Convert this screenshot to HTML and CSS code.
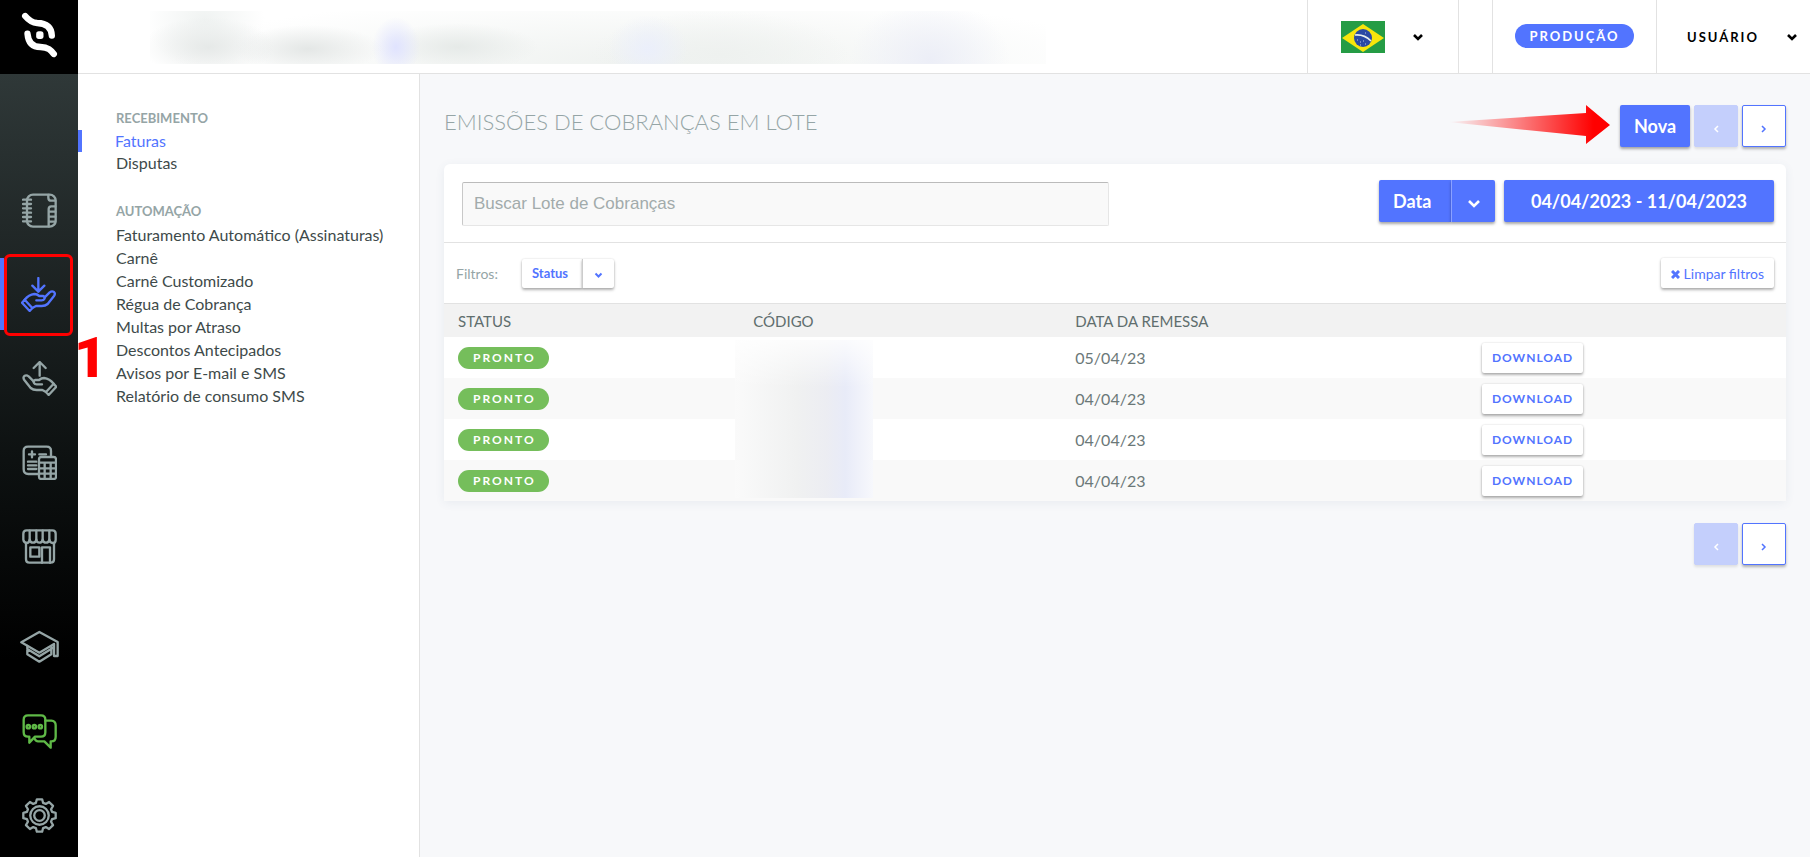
FILE: index.html
```html
<!DOCTYPE html>
<html lang="pt-BR">
<head>
    <meta charset="UTF-8">
    <meta name="viewport" content="width=device-width, initial-scale=1.0">
    <title>Emissões de Cobranças em Lote</title>
    <link rel="stylesheet" href="styles.css">
</head>
<body>

<!-- Main icon bar -->
<nav class="sidebar" aria-label="Principal">
    <a class="logo" href="#" aria-label="Início">
        <svg viewBox="60 36 110 138" width="37" height="46" fill="none" stroke="#fff" stroke-width="19" stroke-linecap="round">
            <path d="M72 48C82 60 92 68 108 69C138 70 151 84 152 107"/>
            <path d="M79 101C81 126 92 141 118 141C142 141 150 152 158 162"/>
            <rect x="105" y="94" width="22" height="23" rx="8" fill="#fff" stroke="none"/>
        </svg>
    </a>

    <div class="nav-group">
        <a class="nav-item" href="#" aria-label="Cadastros">
            <svg class="icon" viewBox="0 0 105 105">
                <rect x="15" y="5" width="86" height="96" rx="18"/>
                <path d="M3 20H27M3 33H27M3 46H27M3 59H27M3 72H27M3 85H27"/>
                <path d="M79 6V14Q79 23 88 23H100M80 100V48Q80 40 88 40H100M80 56H100M80 71H100M80 86H100"/>
            </svg>
        </a>
        <a class="nav-item active" href="#" aria-label="Receber">
            <svg class="icon" viewBox="0 0 105 105">
                <path d="M52 3V44M34 26L52 44L70 26"/>
                <path d="M3 77L11 68L34 93L26 102Z"/>
                <path d="M11 68Q23 53 40 51Q48 51 55 57H66Q74 59 70 66Q68 70 62 70H46"/>
                <path d="M71 61L86 46Q93 41 99 45Q104 50 99 57L80 81Q73 87 62 87H45L34 93"/>
            </svg>
            <span class="highlight"></span>
            <span class="step">1</span>
        </a>
        <a class="nav-item" href="#" aria-label="Pagar">
            <svg class="icon" viewBox="0 0 105 105">
                <path d="M53 44V3M35 21L53 3L71 21"/>
                <g transform="translate(106 0) scale(-1 1)">
                    <path d="M3 77L11 68L34 93L26 102Z"/>
                    <path d="M11 68Q23 53 40 51Q48 51 55 57H66Q74 59 70 66Q68 70 62 70H46"/>
                    <path d="M71 61L86 46Q93 41 99 45Q104 50 99 57L80 81Q73 87 62 87H45L34 93"/>
                </g>
            </svg>
        </a>
        <a class="nav-item" href="#" aria-label="Contabilidade">
            <svg class="icon" viewBox="0 0 105 105">
                <path d="M47 87H19Q5 87 5 73V18Q5 5 18 5H74Q87 5 87 18V34"/>
                <path d="M21 28H39M30 19V37M52 28H72M18 50H43M18 61H43M18 72H43"/>
                <rect x="51" y="36" width="51" height="66" rx="7"/>
                <path d="M51 53H102M51 70H102M51 86H102M68 53V102M86 53V102"/>
            </svg>
        </a>
        <a class="nav-item" href="#" aria-label="Loja">
            <svg class="icon" viewBox="0 0 105 105">
                <path d="M4 32V14Q4 4 14 4H91Q101 4 101 14V32Q101 42 92 42Q84 41 82 32Q80 41 72 41Q64 41 62 32Q60 41 52 41Q44 41 43 32Q41 41 33 41Q25 41 23 32Q21 42 14 42Q5 41 4 32Z"/>
                <path d="M23 5V32M43 5V32M62 5V32M82 5V32M12 42V91Q12 101 22 101H86Q96 101 96 91V42"/>
                <path d="M25 55H52V83H25ZM60 101V55H84V101"/>
            </svg>
        </a>
    </div>

    <div class="nav-group bottom">
        <a class="nav-item" href="#" aria-label="Academia">
            <svg class="icon" viewBox="0 0 117 105">
                <path d="M4 37L58 6L113 36V78H102V42L58 68Z"/>
                <path d="M22 48V73L58 95L94 73V50M22 57L58 79L98 54"/>
            </svg>
        </a>
        <a class="nav-item chat" href="#" aria-label="Chat">
            <svg class="icon" viewBox="0 0 105 105">
                <path d="M18 4H57Q70 4 70 17V55Q70 68 57 68H39L22 86V68H18Q5 68 5 55V17Q5 4 18 4Z"/>
                <circle cx="19" cy="38" r="5"/>
                <circle cx="37" cy="38" r="5"/>
                <circle cx="55" cy="38" r="5"/>
                <path d="M70 20H88Q101 21 101 34V68Q101 82 88 82H86V101L67 82H48Q42 82 38 74"/>
            </svg>
        </a>
        <a class="nav-item" href="#" aria-label="Configurações">
            <svg class="icon" viewBox="-53 -53 106 106">
                <path d="M-11-38L-8-49H8L11-38L19-35L29-41L41-29L35-19L38-11L49-8V8L38 11L35 19L41 29L29 41L19 35L11 38L8 49H-8L-11 38L-19 35L-29 41L-41 29L-35 19L-38 11L-49 8V-8L-38-11L-35-19L-41-29L-29-41L-19-35Z"/>
                <circle r="28"/>
                <circle r="16"/>
            </svg>
        </a>
    </div>
</nav>

<!-- Top bar -->
<header class="topbar">
    <div class="account">
        <div class="account-blur"></div>
    </div>
    <button class="top-cell language" aria-label="Idioma">
        <svg class="flag" viewBox="0 0 44 32" width="44" height="32">
            <rect width="44" height="32" fill="#259c45"/>
            <path d="M1 17L22 3L43 17L22 31Z" fill="#f8e50c"/>
            <circle cx="22" cy="17" r="9" fill="#2a49a3"/>
            <path d="M14 14Q23 13 30 20" fill="none" stroke="#e8f0ec" stroke-width="1.6"/>
            <path d="M16 19h1M19 21h1M22 20h1M24 23h1M19 24h1M24 12h1" stroke="#b8c6ea" stroke-width="1"/>
        </svg>
        <svg class="caret" viewBox="0 0 12 8"><path d="M2 2L6 6L10 2"/></svg>
    </button>
    <div class="top-cell blank"></div>
    <div class="top-cell env"><span class="badge">PRODUÇÃO</span></div>
    <button class="top-cell user">USUÁRIO
        <svg class="caret" viewBox="0 0 12 8"><path d="M2 2L6 6L10 2"/></svg>
    </button>
</header>

<!-- Section menu -->
<aside class="submenu">
    <h2>RECEBIMENTO</h2>
    <ul>
        <li class="current"><a href="#">Faturas</a></li>
        <li><a href="#">Disputas</a></li>
    </ul>
    <h2>AUTOMAÇÃO</h2>
    <ul>
        <li><a href="#">Faturamento Automático (Assinaturas)</a></li>
        <li><a href="#">Carnê</a></li>
        <li><a href="#">Carnê Customizado</a></li>
        <li><a href="#">Régua de Cobrança</a></li>
        <li><a href="#">Multas por Atraso</a></li>
        <li><a href="#">Descontos Antecipados</a></li>
        <li><a href="#">Avisos por E-mail e SMS</a></li>
        <li><a href="#">Relatório de consumo SMS</a></li>
    </ul>
</aside>

<main class="content">
    <div class="title-row">
        <h1>EMISSÕES DE COBRANÇAS EM LOTE</h1>
        <svg class="pointer" viewBox="0 0 162 39" width="162" height="39">
            <defs>
                <linearGradient id="fade">
                    <stop offset="0" stop-color="#f00" stop-opacity="0"/>
                    <stop offset="0.9" stop-color="#f00"/>
                </linearGradient>
            </defs>
            <path d="M0 17L138 8V0L162 20L138 39V31Z" fill="url(#fade)"/>
        </svg>
        <div class="pager">
            <button class="btn primary">Nova</button>
            <button class="page-btn" aria-label="Anterior" disabled><svg viewBox="0 0 6 8"><path d="M5 1L2 4L5 7"/></svg></button>
            <button class="page-btn" aria-label="Próxima"><svg viewBox="0 0 6 8"><path d="M1 1L4 4L1 7"/></svg></button>
        </div>
    </div>

    <section class="card">
        <div class="search-row">
            <input class="search" type="text" aria-label="Buscar Lote de Cobranças" placeholder="Buscar Lote de Cobranças">
            <div class="date-filter">
                <div class="split">
                    <button class="btn primary">Data</button>
                    <button class="btn primary toggle" aria-label="Escolher data"><svg class="caret" viewBox="0 0 12 8"><path d="M1 1L6 6L11 1"/></svg></button>
                </div>
                <button class="btn primary range">04/04/2023 - 11/04/2023</button>
            </div>
        </div>

        <div class="filter-row">
            <span class="filter-label">Filtros:</span>
            <div class="split small">
                <button class="btn light">Status</button>
                <button class="btn light toggle" aria-label="Escolher status"><svg class="caret" viewBox="0 0 12 8"><path d="M2 2L6 6L10 2"/></svg></button>
            </div>
            <button class="btn light clear">
                <svg viewBox="0 0 9 9" width="9" height="9"><path d="M1 1L8 8M8 1L1 8"/></svg>
                Limpar filtros
            </button>
        </div>

        <div class="table-wrap">
            <table>
                <thead>
                    <tr>
                        <th class="col-status">STATUS</th>
                        <th class="col-code">CÓDIGO</th>
                        <th class="col-date">DATA DA REMESSA</th>
                        <th></th>
                    </tr>
                </thead>
                <tbody>
                    <tr>
                        <td><span class="status">PRONTO</span></td>
                        <td></td>
                        <td>05/04/23</td>
                        <td><button class="btn light download">DOWNLOAD</button></td>
                    </tr>
                    <tr>
                        <td><span class="status">PRONTO</span></td>
                        <td></td>
                        <td>04/04/23</td>
                        <td><button class="btn light download">DOWNLOAD</button></td>
                    </tr>
                    <tr>
                        <td><span class="status">PRONTO</span></td>
                        <td></td>
                        <td>04/04/23</td>
                        <td><button class="btn light download">DOWNLOAD</button></td>
                    </tr>
                    <tr>
                        <td><span class="status">PRONTO</span></td>
                        <td></td>
                        <td>04/04/23</td>
                        <td><button class="btn light download">DOWNLOAD</button></td>
                    </tr>
                </tbody>
            </table>
            <div class="code-blur"></div>
        </div>
    </section>

    <div class="pager footer">
        <button class="page-btn" aria-label="Anterior" disabled><svg viewBox="0 0 6 8"><path d="M5 1L2 4L5 7"/></svg></button>
        <button class="page-btn" aria-label="Próxima"><svg viewBox="0 0 6 8"><path d="M1 1L4 4L1 7"/></svg></button>
    </div>
</main>

</body>
</html>
```
FILE: styles.css
```css
/* Global Styles */
* {
    box-sizing: border-box;
}

body {
    margin: 0;
    min-height: 100vh;
    display: grid;
    grid-template-columns: 78px 342px 1fr;
    grid-template-rows: 74px 1fr;
    font-family: Lato, "Open Sans", sans-serif;
    font-size: 16px;
    color: #3e4a4a;
    background-color: #f7f8fa;
}

a {
    color: inherit;
    text-decoration: none;
}

button {
    font-family: inherit;
    cursor: pointer;
}

/* Icon bar */
.sidebar {
    grid-row: 1 / 3;
    display: flex;
    flex-direction: column;
    background: linear-gradient(#2f3838 74px, #0d1111 460px, #000 660px);
}

.logo {
    height: 74px;
    padding-top: 12px;
    text-align: center;
    background-color: #000;
}

.nav-group {
    padding-top: 100px;
}

.nav-group.bottom {
    margin-top: auto;
    padding: 0 0 6px;
}

.nav-item {
    position: relative;
    display: flex;
    align-items: center;
    justify-content: center;
    height: 72px;
    margin-bottom: 12px;
    color: #95a5a6;
}

.bottom .nav-item:last-child {
    margin-bottom: 0;
}

.nav-item.active {
    color: #5274ff;
    border-left: 4px solid #5274ff;
    padding-right: 6px;
}

.nav-item.chat {
    color: #5fb947;
}

.icon {
    height: 35px;
    fill: none;
    stroke: currentColor;
    stroke-width: 7;
    stroke-linejoin: round;
    stroke-linecap: round;
}

/* Tutorial marks over the active item */
.highlight {
    position: absolute;
    top: -4px;
    right: 5px;
    bottom: -6px;
    left: 0;
    border: 3px solid #f00;
    border-radius: 6px;
}

.step {
    position: absolute;
    top: 80px;
    left: 70px;
    font: 900 56px/40px Roboto, sans-serif;
    color: #f00;
}

/* Top bar */
.topbar {
    grid-column: 2 / 4;
    display: flex;
    background-color: #fff;
    border-bottom: 1px solid #e2e2e2;
}

.account {
    flex: 1;
    padding: 11px 261px 9px 72px;
}

.account-blur {
    height: 100%;
    background:
        radial-gradient(ellipse 66px 30px at 58px 36px, #e6e9e8, transparent),
        radial-gradient(ellipse 60px 50px at 55px 8px, #f0f3f2, transparent),
        radial-gradient(ellipse 74px 24px at 158px 38px, #e4e7e6, transparent),
        radial-gradient(ellipse 24px 30px at 246px 36px, #e0e3ff, transparent),
        radial-gradient(ellipse 80px 24px at 308px 36px, #e6eae8, transparent),
        radial-gradient(ellipse 40px 34px at 498px 38px, #ebeffb, transparent),
        radial-gradient(ellipse 80px 60px at 780px 48px, #eceef7, transparent),
        radial-gradient(ellipse 130px 44px at 570px 44px, #eef1ef, transparent),
        radial-gradient(ellipse 480px 70px at 500px 52px, #eff2f0, transparent);
}

.top-cell {
    display: flex;
    align-items: center;
    padding: 0;
    background: none;
    border: 0;
    border-left: 1px solid #e2e2e2;
}

.language {
    width: 151px;
    gap: 27px;
    padding-left: 33px;
}

.blank {
    width: 34px;
}

.env {
    width: 164px;
    padding: 0 22px 10px;
}

.user {
    width: 154px;
    justify-content: space-between;
    padding: 0 12px 0 30px;
    font-size: 13px;
    font-weight: 700;
    letter-spacing: 2px;
    color: #000;
}

.badge {
    width: 120px;
    margin-top: 8px;
    border-radius: 12px;
    background-color: #5274ff;
    color: #fff;
    font-size: 13px;
    font-weight: 700;
    line-height: 24px;
    letter-spacing: 2px;
    text-align: center;
}

.caret {
    width: 12px;
    height: 8px;
    fill: none;
    stroke: currentColor;
    stroke-width: 2.6;
}

.language .caret {
    color: #000;
}

/* Section menu */
.submenu {
    padding: 34px 0 0;
    background-color: #fff;
    border-right: 1px solid #e2e2e2;
}

.submenu h2 {
    margin: 0;
    padding-left: 38px;
    color: #95a5a6;
    font-size: 13px;
    line-height: 20px;
}

.submenu ul {
    list-style: none;
    margin: 2px 0 27px;
    padding: 0;
}

.submenu li {
    padding-left: 38px;
    line-height: 22px;
}

/* The long list is set a little looser than the first one */
.submenu ul:last-child li {
    line-height: 23px;
}

.submenu .current {
    padding-left: 33px;
    border-left: 4px solid #5274ff;
    color: #5274ff;
}

/* Content */
.content {
    padding: 30px 24px;
}

.title-row {
    display: flex;
    align-items: center;
    height: 43px;
    margin-bottom: 17px;
}

h1 {
    flex: 1;
    margin: 0 0 8px;
    color: #95a5a6;
    font-size: 22px;
    font-weight: 300;
}

.pointer {
    margin: 0 10px 2px 0;
}

.pager {
    display: flex;
    gap: 4px;
}

.pager.footer {
    justify-content: flex-end;
    margin-top: 22px;
}

.page-btn {
    width: 44px;
    height: 42px;
    padding: 4px 0 0;
    background-color: #fff;
    border: 1px solid #5274ff;
    border-radius: 2px;
    box-shadow: 0 2px 3px rgba(0, 0, 0, 0.3);
    color: #5274ff;
}

.page-btn:disabled {
    background-color: #c4cffc;
    border-color: #c4cffc;
    box-shadow: 0 2px 3px rgba(0, 0, 0, 0.1);
    color: #fff;
}

.page-btn svg {
    width: 6px;
    height: 8px;
    fill: none;
    stroke: currentColor;
    stroke-width: 1.5;
}

.btn {
    border: 0;
    border-radius: 2px;
    box-shadow: 0 2px 3px rgba(0, 0, 0, 0.35);
    white-space: nowrap;
}

.btn.primary {
    height: 42px;
    padding: 0 14px;
    background-color: #5274ff;
    color: #fff;
    font-size: 18px;
    font-weight: 700;
}

.btn.light {
    height: 30px;
    padding: 0 10px;
    background-color: #fff;
    color: #5274ff;
    font-size: 12px;
    font-weight: 700;
    box-shadow: 0 2px 3px rgba(0, 0, 0, 0.3), 0 0 2px rgba(0, 0, 0, 0.15);
}

.title-row .primary {
    width: 70px;
}

.card {
    background-color: #fff;
    border-radius: 6px 6px 0 0;
    box-shadow: 0 2px 10px rgba(60, 90, 130, 0.08);
}

.search-row {
    display: flex;
    justify-content: space-between;
    padding: 16px 12px 16px 18px;
    border-bottom: 1px solid #e2e2e2;
}

.search {
    flex: 0 1 647px;
    height: 44px;
    margin: 2px 0 0;
    padding: 0 11px;
    background-color: #f9f9f9;
    border: 1px solid #e6e6e6;
    border-top-color: #bbb;
    border-left-color: #c8c8c8;
    border-radius: 2px;
    font: 17px "Liberation Sans", sans-serif;
}

.search::placeholder {
    color: #a2abab;
}

.date-filter {
    display: flex;
    gap: 9px;
}

.split {
    display: flex;
}

.split .btn:first-child {
    width: 72px;
    border-radius: 2px 0 0 2px;
    text-align: left;
}

.split .toggle {
    width: 44px;
    border-left: 1px solid #8ba1ff;
    border-radius: 0 2px 2px 0;
}

.btn.range {
    width: 270px;
}

.filter-row {
    display: flex;
    align-items: center;
    padding: 15px 12px;
    border-bottom: 1px solid #e2e2e2;
}

.filter-label {
    width: 66px;
    color: #95a5a6;
    font-size: 14px;
}

.split.small .btn {
    height: 29px;
    font-size: 13px;
}

.split.small .btn:first-child {
    width: 60px;
}

.split.small .toggle {
    width: 32px;
    border-left-color: #ccc;
}

.small .caret {
    width: 9px;
    height: 6px;
}

.split .toggle {
    padding: 0;
}

.btn.clear {
    margin-left: auto;
    font-weight: 400;
    font-size: 14px;
}

.clear path {
    stroke: currentColor;
    stroke-width: 3;
}

/* Table */
.table-wrap {
    position: relative;
}

table {
    width: 100%;
    table-layout: fixed;
    border-collapse: collapse;
}

th {
    height: 33px;
    padding: 0 14px;
    background-color: #f2f2f2;
    color: #5f6e6e;
    font-size: 15px;
    font-weight: 400;
    text-align: left;
}

td {
    height: 41px;
    padding: 0 14px;
    color: #6b7878;
}

td:last-child {
    padding-left: 18px;
}

tbody tr:nth-child(even) {
    background-color: #f9f9f9;
}

.col-status {
    width: 22%;
}

.col-code {
    width: 24%;
}

.col-date {
    width: 30%;
}

.status {
    display: inline-block;
    padding: 0 13px 0 15px;
    border-radius: 11px;
    background-color: #75be5b;
    color: #fff;
    font-size: 12px;
    font-weight: 700;
    line-height: 22px;
    letter-spacing: 2px;
}

.btn.download {
    letter-spacing: 1px;
}

/* Blurred code values */
.code-blur {
    position: absolute;
    top: 36px;
    bottom: 3px;
    left: 21.7%;
    width: 138px;
    background:
        linear-gradient(rgba(255, 255, 255, 0.8), transparent 30%),
        linear-gradient(90deg, #fafafa, #f0f1f1 45%, #ecedf2 66%, #e8ebf8 80%, #f7f8fc);
}
```
